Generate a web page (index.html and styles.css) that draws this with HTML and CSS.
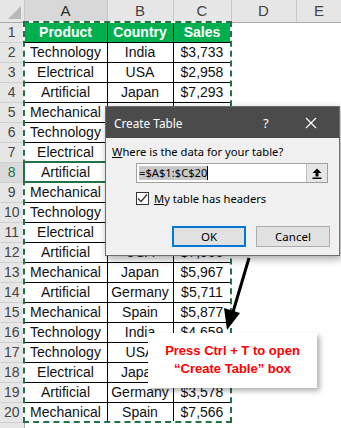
FILE: index.html
```html
<!DOCTYPE html>
<html>
<head>
    <title>Create Table</title>
    <link rel="stylesheet" href="styles.css">
</head>
<body>
    <div class="sheet">
        <table class="grid">
            <colgroup>
                <col class="c-rn">
                <col class="c-a">
                <col class="c-b">
                <col class="c-c">
                <col class="c-d">
                <col class="c-e">
            </colgroup>
            <thead>
                <tr>
                    <th class="corner"><span class="tri"></span></th>
                    <th class="colhead sel">A</th>
                    <th class="colhead">B</th>
                    <th class="colhead">C</th>
                    <th class="colhead">D</th>
                    <th class="colhead">E</th>
                </tr>
            </thead>
            <tbody>
                <tr><th class="rn">1</th><td class="hd">Product</td><td class="hd">Country</td><td class="hd">Sales</td><td class="blank"></td><td class="blank"></td></tr>
                <tr><th class="rn">2</th><td>Technology</td><td>India</td><td>$3,733</td><td class="blank"></td><td class="blank"></td></tr>
                <tr><th class="rn">3</th><td>Electrical</td><td>USA</td><td>$2,958</td><td class="blank"></td><td class="blank"></td></tr>
                <tr><th class="rn">4</th><td>Artificial</td><td>Japan</td><td>$7,293</td><td class="blank"></td><td class="blank"></td></tr>
                <tr><th class="rn">5</th><td>Mechanical</td><td>Germany</td><td>$7,045</td><td class="blank"></td><td class="blank"></td></tr>
                <tr><th class="rn">6</th><td>Technology</td><td>Spain</td><td>$4,102</td><td class="blank"></td><td class="blank"></td></tr>
                <tr><th class="rn">7</th><td>Electrical</td><td>India</td><td>$6,320</td><td class="blank"></td><td class="blank"></td></tr>
                <tr><th class="rn act">8</th><td>Artificial</td><td>USA</td><td>$5,218</td><td class="blank"></td><td class="blank"></td></tr>
                <tr><th class="rn">9</th><td>Mechanical</td><td>Japan</td><td>$3,871</td><td class="blank"></td><td class="blank"></td></tr>
                <tr><th class="rn">10</th><td>Technology</td><td>Germany</td><td>$6,905</td><td class="blank"></td><td class="blank"></td></tr>
                <tr><th class="rn">11</th><td>Electrical</td><td>Spain</td><td>$2,644</td><td class="blank"></td><td class="blank"></td></tr>
                <tr><th class="rn">12</th><td>Artificial</td><td>USA</td><td>$7,966</td><td class="blank"></td><td class="blank"></td></tr>
                <tr><th class="rn">13</th><td>Mechanical</td><td>Japan</td><td>$5,967</td><td class="blank"></td><td class="blank"></td></tr>
                <tr><th class="rn">14</th><td>Artificial</td><td>Germany</td><td>$5,711</td><td class="blank"></td><td class="blank"></td></tr>
                <tr><th class="rn">15</th><td>Mechanical</td><td>Spain</td><td>$5,877</td><td class="blank"></td><td class="blank"></td></tr>
                <tr><th class="rn">16</th><td>Technology</td><td>India</td><td>$4,659</td><td class="blank"></td><td class="blank"></td></tr>
                <tr><th class="rn">17</th><td>Technology</td><td>USA</td><td>$6,183</td><td class="blank"></td><td class="blank"></td></tr>
                <tr><th class="rn">18</th><td>Electrical</td><td>Japan</td><td>$2,497</td><td class="blank"></td><td class="blank"></td></tr>
                <tr><th class="rn">19</th><td>Artificial</td><td>Germany</td><td>$3,578</td><td class="blank"></td><td class="blank"></td></tr>
                <tr><th class="rn">20</th><td>Mechanical</td><td>Spain</td><td>$7,566</td><td class="blank"></td><td class="blank"></td></tr>
                <tr><th class="rn"></th><td class="blank"></td><td class="blank"></td><td class="blank"></td><td class="blank"></td><td class="blank"></td></tr>
            </tbody>
        </table>

        <!-- copy selection (marching ants) -->
        <div class="ants"></div>
        <!-- active cell A8 -->
        <div class="active-cell"></div>

        <div class="dialog">
            <div class="dlg-title">
                <span class="dlg-name">Create Table</span>
                <span class="dlg-help">?</span>
                <span class="dlg-close">
                    <svg width="12" height="12" viewBox="0 0 12 12"><path d="M1 1L11 11M11 1L1 11" stroke="#fff" stroke-width="1.2"/></svg>
                </span>
            </div>
            <div class="dlg-body">
                <div class="dlg-label"><u>W</u>here is the data for your table?</div>
                <div class="range">
                    <div class="range-text"><span class="range-sel">=$A$1:$C$20</span><span class="caret"></span></div>
                    <div class="range-btn">
                        <svg width="10" height="11" viewBox="0 0 10 11"><path d="M5 0.5L9.5 5H6.5V8.5H3.5V5H0.5Z" fill="#000"/><rect x="0.5" y="9.5" width="9" height="1.5" fill="#000"/></svg>
                    </div>
                </div>
                <div class="check-row">
                    <span class="checkbox">
                        <svg width="11" height="11" viewBox="0 0 11 11"><path d="M1 5.5L4 8.5L10 1.5" stroke="#333" stroke-width="1.3" fill="none"/></svg>
                    </span>
                    <span class="check-label"><u>M</u>y table has headers</span>
                </div>
                <div class="dlg-buttons">
                    <button class="btn btn-ok">OK</button>
                    <button class="btn">Cancel</button>
                </div>
            </div>
        </div>

        <svg class="arrow" width="40" height="80" viewBox="0 0 40 80">
            <line x1="30" y1="2" x2="14" y2="56" stroke="#000" stroke-width="3"/>
            <path d="M5 52L21 57L8 74Z" fill="#000"/>
        </svg>

        <div class="callout">
            <div>Press Ctrl + T to open</div>
            <div>“Create Table” box</div>
        </div>
    </div>
</body>
</html>
```

FILE: styles.css
```css
body {
    margin: 0;
    background-color: #fff;
    overflow: hidden;
}

.sheet {
    position: relative;
    width: 341px;
    height: 428px;
    overflow: hidden;
    font-family: "Liberation Sans", Arial, sans-serif;
}

.grid {
    border-collapse: collapse;
    table-layout: fixed;
    width: 342px;
}

.c-rn { width: 24px; }
.c-a { width: 83px; }
.c-b { width: 66px; }
.c-c { width: 58px; }
.c-d { width: 65px; }
.c-e { width: 46px; }

.grid thead tr {
    height: 22px;
}

.grid tbody tr {
    height: 20px;
}

.grid th,
.grid td {
    padding: 0;
    white-space: nowrap;
    overflow: hidden;
}

.corner {
    position: relative;
    background-color: #e6e6e6;
    border-right: 1px solid #c8c8c8;
    border-bottom: 1px solid #ababab;
}

.tri {
    position: absolute;
    right: 3px;
    bottom: 3px;
    width: 0;
    height: 0;
    border-left: 13px solid transparent;
    border-bottom: 13px solid #b8b8b8;
}

.colhead {
    background-color: #e6e6e6;
    border-right: 1px solid #c8c8c8;
    border-bottom: 1px solid #ababab;
    font-weight: normal;
    font-size: 15px;
    color: #444;
    text-align: center;
}

.colhead.sel {
    background-color: #d8d8d8;
    color: #2b2b2b;
}

.rn {
    background-color: #e6e6e6;
    border-right: 1px solid #ababab;
    border-bottom: 1px solid #d0d0d0;
    font-weight: normal;
    font-size: 14px;
    color: #444;
    text-align: center;
}

.rn.act {
    background-color: #dadada;
    color: #217346;
}

.grid td {
    border: 1px solid #000;
    font-size: 14px;
    color: #111;
    text-align: center;
}

.grid td.hd {
    background-color: #00b050;
    color: #fff;
    font-weight: bold;
}

.grid td.blank {
    border: none;
}

.ants {
    position: absolute;
    left: 23px;
    top: 21px;
    width: 209px;
    height: 402px;
    box-sizing: border-box;
    border: 2px solid #fff;
}

.ants::after {
    content: "";
    position: absolute;
    left: -2px;
    top: -2px;
    right: -2px;
    bottom: -2px;
    border: 2px dashed #217346;
}

.active-cell {
    position: absolute;
    left: 23px;
    top: 161px;
    width: 85px;
    height: 22px;
    box-sizing: border-box;
    border: 2px solid #217346;
}

.dialog {
    position: absolute;
    left: 105px;
    top: 106px;
    width: 235px;
    height: 150px;
    box-sizing: border-box;
    background-color: #f0f0f0;
    border: 1px solid #6d6d6d;
    box-shadow: 2px 3px 8px rgba(0, 0, 0, 0.35);
    font-family: "Noto Sans", "Open Sans", sans-serif;
    font-size: 11.2px;
    color: #000;
}

.dlg-title {
    display: flex;
    align-items: center;
    height: 31px;
    background-color: #4b4b4b;
    color: #fff;
    padding-left: 8px;
}

.dlg-name {
    flex: 1;
    font-size: 11.8px;
}

.dlg-help {
    width: 20px;
    font-size: 13px;
    margin-right: 22px;
}

.dlg-close {
    display: flex;
    width: 34px;
}

.dlg-body {
    padding: 6px 11px 0 6px;
}

.dlg-label {
    line-height: 16px;
}

.range {
    display: flex;
    margin: 3px 0 0 24px;
    height: 18px;
    border: 1px solid #a0a0a0;
    background-color: #fff;
}

.range-text {
    flex: 1;
    display: flex;
    align-items: center;
    padding-left: 2px;
    line-height: 14px;
}

.range-sel {
    background-color: #c8c8c8;
}

.caret {
    width: 1px;
    height: 14px;
    background-color: #000;
}

.range-btn {
    display: flex;
    align-items: center;
    justify-content: center;
    width: 20px;
    background-color: #e6e6e6;
    border-left: 1px solid #c0c0c0;
}

.check-row {
    display: flex;
    align-items: center;
    margin: 8px 0 0 24px;
}

.checkbox {
    display: flex;
    align-items: center;
    justify-content: center;
    width: 11px;
    height: 11px;
    border: 1px solid #333;
    background-color: #fff;
    margin-right: 5px;
}

.dlg-buttons {
    display: flex;
    justify-content: flex-end;
    gap: 10px;
    margin-top: 20px;
    margin-right: -2px;
}

.btn {
    width: 74px;
    height: 21px;
    padding: 0;
    background-color: #e1e1e1;
    border: 1px solid #adadad;
    font-family: "Noto Sans", "Open Sans", sans-serif;
    font-size: 11.5px;
    color: #000;
}

.btn-ok {
    border: 2px solid #0078d7;
}

.arrow {
    position: absolute;
    left: 219px;
    top: 256px;
}

.callout {
    position: absolute;
    left: 148px;
    top: 333px;
    width: 169px;
    height: 55px;
    box-sizing: border-box;
    padding-top: 9px;
    background-color: #fff;
    box-shadow: 3px 3px 5px rgba(0, 0, 0, 0.3);
    color: #ff0000;
    font-family: "Liberation Sans", Arial, sans-serif;
    font-weight: bold;
    font-size: 13px;
    line-height: 18px;
    text-align: center;
}
```
